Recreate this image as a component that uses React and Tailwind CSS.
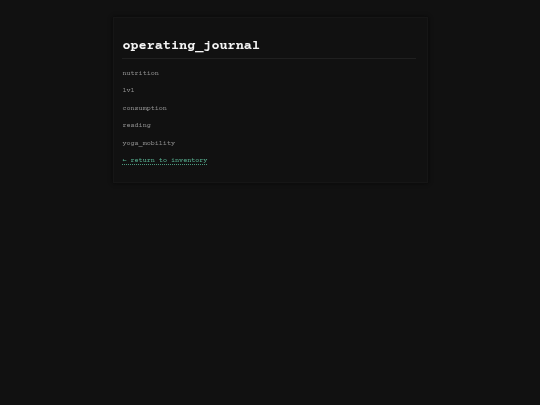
const ENTRIES = ['nutrition', 'lvl', 'consumption', 'reading', 'yoga_mobility'];

export default function App() {
  return (
    <div className="min-h-screen bg-[#111111] pt-[16.5px] font-['Courier_Prime','Courier_New','Liberation_Mono',monospace]">
      <main className="mx-auto h-[166px] w-[315px] border border-[#161616] bg-[#111111] shadow-[0_0_4px_#080808]">
        <div className="pt-[19px] pr-[11px] pl-[8.4px] will-change-transform">
          <h1 className="h-[22px] border-b border-[#202020] text-[13.5px] leading-[18px] font-bold text-[#f4f4f4]">
            operating_journal
          </h1>
          <ul className="mt-[9.5px] text-[6.75px] leading-[10px] text-[#949494]">
            {ENTRIES.map(entry => (
              <li key={entry} className="mb-[7.6px]">{entry}</li>
            ))}
          </ul>
          <a href="#" className="block h-[9px] w-fit border-b border-dotted border-[#4a9a7e] text-[6.75px] leading-[9px] text-[#5bb897]">
            <span className="font-['DejaVu_Sans_Mono',monospace] leading-none">←</span> return to inventory
          </a>
        </div>
      </main>
    </div>
  );
}
